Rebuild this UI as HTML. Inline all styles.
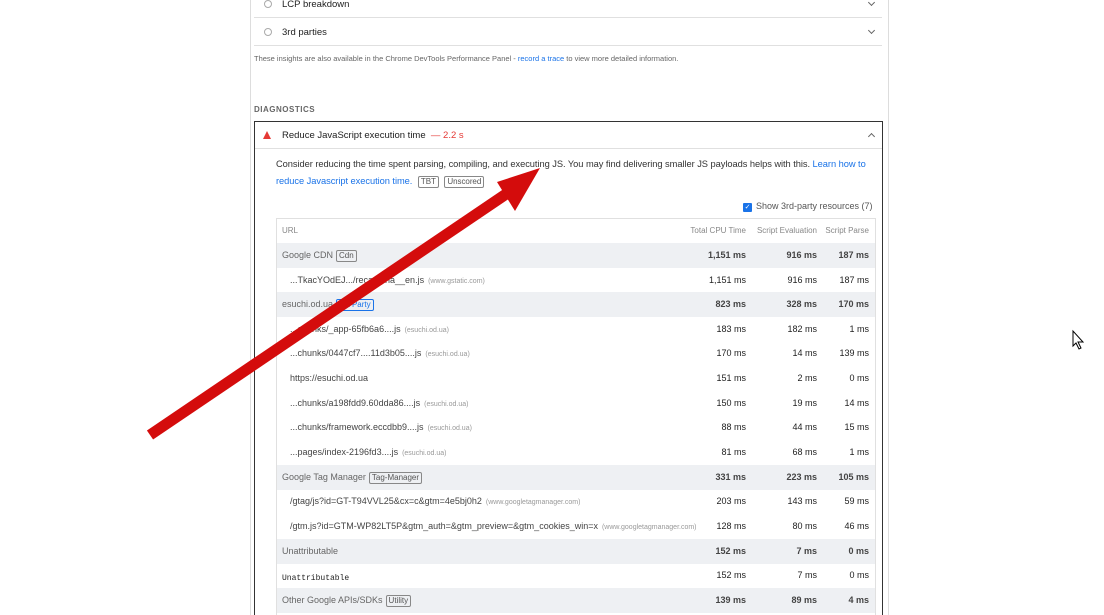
<!DOCTYPE html>
<html style="width:1104px;height:615px;overflow:hidden"><head><style>
*{margin:0;padding:0;box-sizing:border-box}
body{width:1104px;height:615px;background:#fff;position:relative;overflow:hidden;font-family:"Liberation Sans",sans-serif;font-size:9px;color:#212121}
.a{position:absolute;white-space:nowrap}
.sep{position:absolute;height:1px;background:#e0e0e0}
.row{position:absolute;left:277px;width:598px;height:24.7px;line-height:24.7px}
.g{background:#eef0f3;color:#666}
.g .n{font-weight:bold;color:#444}
.n{position:absolute;text-align:right}
.c1{right:129px}.c2{right:58px}.c3{right:6px}
.u{position:absolute;left:13px;color:#444}
.gu{position:absolute;left:5px}
.h{font-size:7px;color:#999;margin-left:4px}
.tag{border:1px solid #888;border-radius:2px;padding:0 2px;font-size:8px;color:#555;margin-left:3px;line-height:10px;display:inline-block}
.rad{position:absolute;width:8px;height:8px;border:1px solid #aaa;border-radius:50%}
.chev{position:absolute;width:5px;height:5px;border-right:1px solid #666;border-bottom:1px solid #666}
</style></head><body>
<div style="position:absolute;left:250px;top:0;width:1px;height:615px;background:#ddd"></div>
<div style="position:absolute;left:888px;top:0;width:1px;height:615px;background:#ddd"></div>
<div class="rad" style="left:264px;top:0px"></div>
<div class="a" style="left:282px;top:-1px;font-size:9.5px">LCP breakdown</div>
<div class="chev" style="left:869px;top:0px;transform:rotate(45deg)"></div>
<div class="sep" style="left:254px;top:17px;width:628px"></div>
<div class="rad" style="left:264px;top:28px"></div>
<div class="a" style="left:282px;top:27px;font-size:9.5px">3rd parties</div>
<div class="chev" style="left:869px;top:28px;transform:rotate(45deg)"></div>
<div class="sep" style="left:254px;top:45px;width:628px"></div>
<div class="a" style="left:254px;top:54px;font-size:7.5px;color:#666">These insights are also available in the Chrome DevTools Performance Panel - <span style="color:#1a73e8">record a trace</span> to view more detailed information.</div>
<div class="a" style="left:254px;top:105px;font-size:8px;font-weight:bold;color:#666;letter-spacing:.5px">DIAGNOSTICS</div>
<div style="position:absolute;left:254px;top:121px;width:629px;height:494px;border:1px solid #333;border-bottom:none"></div>
<div class="a" style="left:263px;top:131px;width:0;height:0;border-left:4.5px solid transparent;border-right:4.5px solid transparent;border-bottom:8px solid #e53935"></div>
<div class="a" style="left:282px;top:130px;font-size:9.5px">Reduce JavaScript execution time <span style="color:#e53935">&nbsp;— 2.2 s</span></div>
<div class="chev" style="left:869px;top:134px;transform:rotate(225deg)"></div>
<div class="sep" style="left:255px;top:148px;width:627px"></div>
<div class="a" style="left:276px;top:156px;font-size:9.3px;line-height:17px;color:#333;letter-spacing:-0.05px">Consider reducing the time spent parsing, compiling, and executing JS. You may find delivering smaller JS payloads helps with this. <span style="color:#1a73e8">Learn how to</span><br><span style="color:#1a73e8">reduce Javascript execution time.</span> <span class="tag">TBT</span> <span class="tag">Unscored</span></div>
<div class="a" style="left:743px;top:203px;width:9px;height:9px;background:#1a73e8;border-radius:1px;color:#fff;font-size:7px;line-height:9px;text-align:center">✓</div>
<div class="a" style="left:756px;top:201px;font-size:9px;color:#555">Show 3rd-party resources (7)</div>
<div style="position:absolute;left:276px;top:218px;width:600px;height:397px;border:1px solid #e0e0e0;border-bottom:none"></div>
<div class="row" style="top:219px;color:#888;font-size:8px"><span class="u" style="left:5px;color:#888">URL</span><span class="n c1">Total CPU Time</span><span class="n c2">Script Evaluation</span><span class="n c3">Script Parse</span></div>
<div class="row g" style="top:243px"><span class="gu">Google CDN<span class="tag">Cdn</span></span><span class="n c1">1,151 ms</span><span class="n c2">916 ms</span><span class="n c3">187 ms</span></div>
<div class="row" style="top:268px"><span class="u">...TkacYOdEJ.../recaptcha__en.js<span class="h">(www.gstatic.com)</span></span><span class="n c1">1,151 ms</span><span class="n c2">916 ms</span><span class="n c3">187 ms</span></div>
<div class="row g" style="top:292px"><span class="gu">esuchi.od.ua<span class="tag" style="border-color:#1a73e8;color:#1a73e8">1st Party</span></span><span class="n c1">823 ms</span><span class="n c2">328 ms</span><span class="n c3">170 ms</span></div>
<div class="row" style="top:317px"><span class="u">...chunks/_app-65fb6a6....js<span class="h">(esuchi.od.ua)</span></span><span class="n c1">183 ms</span><span class="n c2">182 ms</span><span class="n c3">1 ms</span></div>
<div class="row" style="top:341px"><span class="u">...chunks/0447cf7....11d3b05....js<span class="h">(esuchi.od.ua)</span></span><span class="n c1">170 ms</span><span class="n c2">14 ms</span><span class="n c3">139 ms</span></div>
<div class="row" style="top:366px"><span class="u">https://esuchi.od.ua</span><span class="n c1">151 ms</span><span class="n c2">2 ms</span><span class="n c3">0 ms</span></div>
<div class="row" style="top:391px"><span class="u">...chunks/a198fdd9.60dda86....js<span class="h">(esuchi.od.ua)</span></span><span class="n c1">150 ms</span><span class="n c2">19 ms</span><span class="n c3">14 ms</span></div>
<div class="row" style="top:415px"><span class="u">...chunks/framework.eccdbb9....js<span class="h">(esuchi.od.ua)</span></span><span class="n c1">88 ms</span><span class="n c2">44 ms</span><span class="n c3">15 ms</span></div>
<div class="row" style="top:440px"><span class="u">...pages/index-2196fd3....js<span class="h">(esuchi.od.ua)</span></span><span class="n c1">81 ms</span><span class="n c2">68 ms</span><span class="n c3">1 ms</span></div>
<div class="row g" style="top:465px"><span class="gu">Google Tag Manager<span class="tag">Tag-Manager</span></span><span class="n c1">331 ms</span><span class="n c2">223 ms</span><span class="n c3">105 ms</span></div>
<div class="row" style="top:489px"><span class="u">/gtag/js?id=GT-T94VVL25&amp;cx=c&amp;gtm=4e5bj0h2<span class="h">(www.googletagmanager.com)</span></span><span class="n c1">203 ms</span><span class="n c2">143 ms</span><span class="n c3">59 ms</span></div>
<div class="row" style="top:514px"><span class="u">/gtm.js?id=GTM-WP82LT5P&amp;gtm_auth=&amp;gtm_preview=&amp;gtm_cookies_win=x<span class="h">(www.googletagmanager.com)</span></span><span class="n c1">128 ms</span><span class="n c2">80 ms</span><span class="n c3">46 ms</span></div>
<div class="row g" style="top:539px"><span class="gu">Unattributable</span><span class="n c1">152 ms</span><span class="n c2">7 ms</span><span class="n c3">0 ms</span></div>
<div class="row" style="top:563px"><span class="gu" style="font-family:'Liberation Mono',monospace;font-size:8px;top:4px">Unattributable</span><span class="n c1">152 ms</span><span class="n c2">7 ms</span><span class="n c3">0 ms</span></div>
<div class="row g" style="top:588px"><span class="gu">Other Google APIs/SDKs<span class="tag">Utility</span></span><span class="n c1">139 ms</span><span class="n c2">89 ms</span><span class="n c3">4 ms</span></div>
<svg style="position:absolute;left:0;top:0" width="1104" height="615">
<line x1="150" y1="435" x2="515" y2="188" stroke="#d40c0c" stroke-width="11"/>
<polygon points="540,168 497,182 515,211" fill="#d40c0c"/>
<path d="M1073 331 L1073 346 L1076 343 L1079 349 L1081 348 L1078 342 L1083 342 Z" fill="#fff" stroke="#000" stroke-width="1"/>
</svg>
</body></html>
